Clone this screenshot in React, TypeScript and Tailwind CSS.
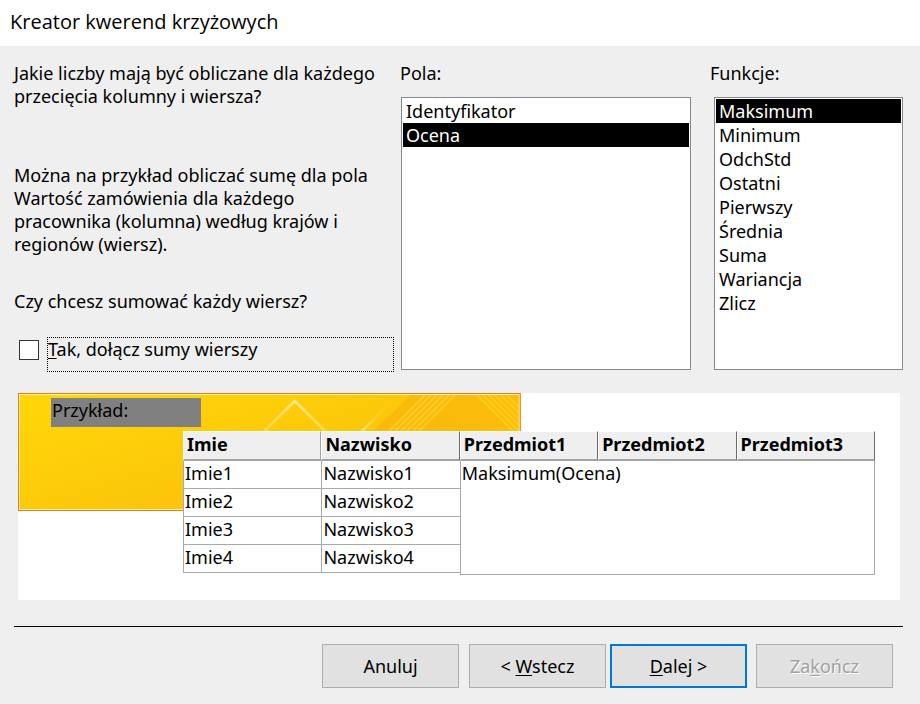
import React, { useState } from 'react';

const FIELDS = ['Identyfikator', 'Ocena'];
const FUNCTIONS = ['Maksimum', 'Minimum', 'OdchStd', 'Ostatni', 'Pierwszy', 'Średnia', 'Suma', 'Wariancja', 'Zlicz'];
const ROWS = [1, 2, 3, 4];

interface ListBoxProps {
  id: string;
  label: string;
  items: string[];
  value: string;
  onChange: (value: string) => void;
  className: string;
}

const ListBox: React.FC<ListBoxProps> = ({ id, label, items, value, onChange, className }) => (
  <div className="flex flex-col">
    <label htmlFor={id}>{label}</label>
    <select
      id={id}
      size={items.length < 3 ? 3 : items.length}
      value={value}
      onChange={(e) => onChange(e.target.value)}
      className={`mt-3 h-[273px] rounded-none border border-[#828790] bg-white p-px text-black outline-none overflow-hidden ${className}`}
    >
      {items.map((item) => (
        <option key={item} value={item} className="h-6 px-[3px] py-0 leading-6 text-black checked:bg-black checked:bg-[linear-gradient(#000,#000)] checked:text-white">
          {item}
        </option>
      ))}
    </select>
  </div>
);

const Banner: React.FC = () => (
  <svg className="absolute left-0 top-0 h-[118px] w-[57%]" viewBox="0 0 504 118" preserveAspectRatio="none" aria-hidden="true">
    <defs>
      <linearGradient id="gold" gradientUnits="userSpaceOnUse" x1="0" y1="0" x2="90" y2="300">
        <stop offset="0" stopColor="#ffd808" />
        <stop offset="0.5" stopColor="#fcc40b" />
        <stop offset="1" stopColor="#fbb80c" />
      </linearGradient>
      <linearGradient id="peak" x1="0" y1="0" x2="0" y2="1">
        <stop offset="0" stopColor="#ffe98c" />
        <stop offset="1" stopColor="#ffdc50" stopOpacity="0.7" />
      </linearGradient>
      <linearGradient id="ray" x1="0" y1="1" x2="1" y2="0">
        <stop offset="0" stopColor="#ffe16a" />
        <stop offset="1" stopColor="#fcc40c" stopOpacity="0" />
      </linearGradient>
      <linearGradient id="shade" x1="0" y1="0" x2="1" y2="0">
        <stop offset="0" stopColor="#fab70c" />
        <stop offset="1" stopColor="#fbbb0c" />
      </linearGradient>
    </defs>
    <rect width="504" height="118" fill="url(#gold)" />
    <path d="M356 38L394 2H502V38Z" fill="url(#shade)" opacity="0.85" />
    <path d="M245 40L277.500 8L310 40" fill="none" stroke="url(#peak)" strokeWidth="2.500" />
    <path d="M343 40L380 3" stroke="url(#ray)" strokeWidth="2.500" />
    <path d="M372 38L408 2M378 38L414 2M384 38L420 2M390 38L426 2M396 38L432 2M402 38L438 2" stroke="#ffcf2a" strokeWidth="2" opacity="0.85" />
    <path d="M460 2L496 38M466 2L502 38M472 2L502 32M478 2L502 26M484 2L502 20M490 2L502 14" stroke="#ffcf1a" strokeWidth="2" opacity="0.85" />
    <rect x="1.500" y="1.500" width="501" height="115" fill="none" stroke="#fff3b8" />
    <rect x="0.500" y="0.500" width="503" height="117" fill="none" stroke="#ef7d0b" />
  </svg>
);

const SampleTable: React.FC<{ result: string }> = ({ result }) => (
  <table className="w-full table-fixed border-separate border-spacing-0 text-left">
    <thead>
      <tr className="h-[30px]">
        {['Imie', 'Nazwisko', 'Przedmiot1', 'Przedmiot2', 'Przedmiot3'].map((name, i) => (
          <th
            key={name}
            scope="col"
            className={`border-t border-r border-b-2 border-l border-t-white border-b-[#a3a3a6] border-l-white bg-[#efefef] p-0 pl-[3px] align-top leading-6 font-bold ${i === 0 ? 'border-r-[#a3a3a6]' : 'border-r-[#6a6a6a]'}`}
          >
            {name}
          </th>
        ))}
      </tr>
    </thead>
    <tbody>
      {ROWS.map((n) => (
        <tr key={n} className="h-7">
          <td className="border-b border-l border-[#a9a9b0] bg-white p-0 pl-px align-top leading-6">Imie{n}</td>
          <td className="border-b border-l border-[#a9a9b0] bg-white p-0 pl-px align-top leading-6">Nazwisko{n}</td>
          {n === 1 && (
            <td colSpan={3} rowSpan={5} className="border-x border-b border-[#a9a9b0] bg-white p-0 pl-px align-top leading-6">
              {result}
            </td>
          )}
        </tr>
      ))}
      <tr className="h-0.5">
        <td colSpan={2} className="p-0" />
      </tr>
    </tbody>
  </table>
);

const buttonClass = 'h-11 w-[137px] border border-[#adadad] bg-[#e1e1e1]';

const App: React.FC = () => {
  const [field, setField] = useState('Ocena');
  const [fn, setFn] = useState('Maksimum');
  const [sumRows, setSumRows] = useState(false);

  return (
    <div className="min-h-screen bg-[#efefef] font-['Noto_Sans','Liberation_Sans',sans-serif] text-[18px] leading-[23px] text-black">
      <header className="flex h-[46px] items-center bg-white pl-2.5">
        <h1 className="pb-0.5 font-['Open_Sans','Noto_Sans',sans-serif] text-[20px] leading-7">Kreator kwerend krzyżowych</h1>
      </header>

      <main className="pt-4 pr-[17px] pl-3.5">
        <section className="grid grid-cols-[386fr_310fr_193fr]">
          <div className="pr-1.5">
            <p>
              Jakie liczby mają być obliczane dla każdego
              <br />
              przecięcia kolumny i wiersza?
            </p>
            <p className="mt-14">
              Można na przykład obliczać sumę dla pola
              <br />
              Wartość zamówienia dla każdego
              <br />
              pracownika (kolumna) według krajów i
              <br />
              regionów (wiersz).
            </p>
            <p className="mt-[34px]">Czy chcesz sumować każdy wiersz?</p>
            <div className="mt-6 flex">
              <input
                id="sum-rows"
                type="checkbox"
                checked={sumRows}
                onChange={(e) => setSumRows(e.target.checked)}
                className="mt-[3px] mr-2 ml-[5px] size-5 shrink-0 appearance-none border border-[#333] bg-white checked:bg-[#333]"
              />
              <label htmlFor="sum-rows" className="h-[35px] grow border border-dotted border-black">
                <u className="underline-offset-2">T</u>ak, dołącz sumy wierszy
              </label>
            </div>
          </div>
          <div className="pr-[19px]">
            <ListBox id="fields" label="Pola:" items={FIELDS} value={field} onChange={setField} className="ml-px" />
          </div>
          <ListBox id="functions" label="Funkcje:" items={FUNCTIONS} value={fn} onChange={setFn} className="ml-1" />
        </section>

        <section className="relative mt-[21px] mr-[3px] ml-1 h-[207px] bg-white">
          <Banner />
          <div className="relative flow-root pr-[25px]">
            <h2 className="mt-[5px] ml-[33px] h-[29px] w-[150px] bg-[#808080] pl-px leading-6">Przykład:</h2>
            <div className="mt-1 ml-[165px]">
              <SampleTable result={`${fn}(${field})`} />
            </div>
          </div>
        </section>

        <hr className="mt-[26px] border-t border-black" />

        <footer className="mt-[17px] flex justify-end pr-2.5 pb-4">
          <button type="button" className={`${buttonClass} mr-2.5`}>Anuluj</button>
          <button type="button" className={`${buttonClass} mr-1`}>
            &lt; <u className="underline-offset-2">W</u>stecz
          </button>
          <button type="button" className="mr-[9px] h-11 w-[137px] border-2 border-[#0078d7] bg-[#e1e1e1]">
            <u className="underline-offset-2">D</u>alej &gt;
          </button>
          <button type="button" disabled className={`${buttonClass} text-[#a0a0a0] [text-shadow:1px_1px_0_#fff]`}>
            Za<u className="underline-offset-2">k</u>ończ
          </button>
        </footer>
      </main>
    </div>
  );
};

export default App;
